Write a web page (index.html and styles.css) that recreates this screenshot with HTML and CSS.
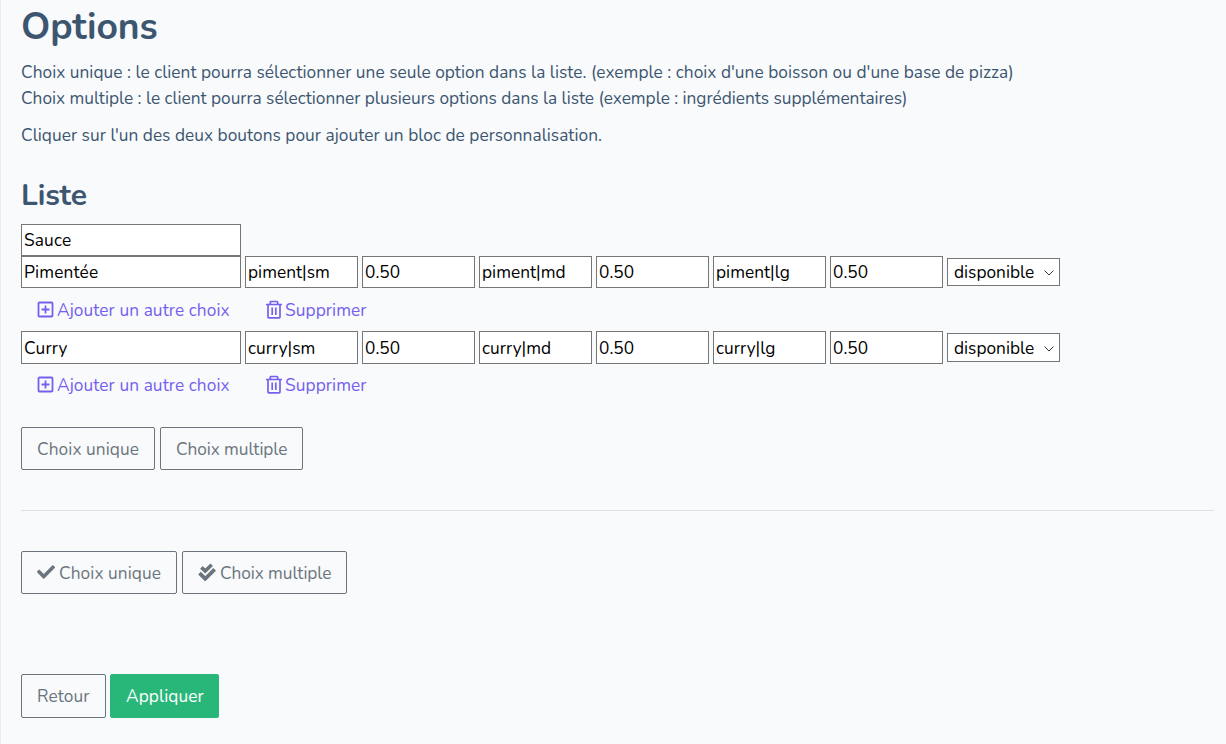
FILE: index.html
```html
<!DOCTYPE html>
<html lang="fr">
<head>
<meta charset="utf-8">
<title>Options</title>
<link rel="stylesheet" href="styles.css">
</head>
<body>
<svg class="sprite" aria-hidden="true">
  <symbol id="plus" viewBox="0 0 18 18"><path d="M2.5 1.5h12a1 1 0 0 1 1 1v12a1 1 0 0 1-1 1h-12a1 1 0 0 1-1-1v-12a1 1 0 0 1 1-1zM8.5 4.500v8M4.500 8.500h8" fill="none" stroke="currentColor" stroke-width="1.800"/></symbol>
  <symbol id="trash" viewBox="0 0 18 20"><path d="M1 4.500h16M5.300 4.200V2.400q0-.9.900-.9h5.600q.9 0 .9.900v1.800M3 4.500v12.500q0 .9.900.9h10.200q.9 0 .9-.9V4.500M7.200 7.500v7.500M10.800 7.500v7.500" fill="none" stroke="currentColor" stroke-width="1.700"/></symbol>
  <symbol id="check" viewBox="0 0 512 512"><path fill="currentColor" d="M173.900 439.400 7.500 273c-10-10-10-26.200 0-36.200l36.200-36.200c10-10 26.200-10 36.200 0L192 312.700 432.100 72.600c10-10 26.200-10 36.200 0l36.200 36.200c10 10 10 26.200 0 36.200L210.100 439.400c-10 10-26.200 10-36.200 0z"/></symbol>
  <symbol id="checks" viewBox="0 0 18 18"><path d="M1.500 10.100 7.200 15.800 16.700 6.400" fill="none" stroke="currentColor" stroke-width="3.800"/><path d="M3.400 4.400 7.200 8.100 13.700 1.700" fill="none" stroke="currentColor" stroke-width="3.600"/></symbol>
</svg>
<main class="page">
  <h1 class="title">Options</h1>
  <p class="intro"><span class="first-line">Choix unique : le client pourra sélectionner une seule option dans la liste. (exemple : choix d'une boisson ou d'une base de pizza)</span><br><span class="second-line">Choix multiple : le client pourra sélectionner plusieurs options dans la liste (exemple : ingrédients supplémentaires)</span></p>
  <p class="intro first-line">Cliquer sur l'un des deux boutons pour ajouter un bloc de personnalisation.</p>
  <h2 class="subtitle">Liste</h2>
  <div class="row"><input class="field wide" value="Sauce"></div>
  <div class="row">
    <input class="field wide" value="Pimentée">
    <input class="field" value="piment|sm"><input class="field" value="0.50">
    <input class="field" value="piment|md"><input class="field" value="0.50">
    <input class="field" value="piment|lg"><input class="field" value="0.50">
    <div class="select">disponible<svg class="chevron" viewBox="0 0 10 6"><path d="M.5.5 5 5 9.500.5" fill="none" stroke="currentColor"/></svg></div>
  </div>
  <div class="actions">
    <a class="link add"><svg class="icon-plus"><use href="#plus"/></svg>Ajouter un autre choix</a>
    <a class="link remove"><svg class="icon-trash"><use href="#trash"/></svg>Supprimer</a>
  </div>
  <div class="row tall">
    <input class="field wide" value="Curry">
    <input class="field" value="curry|sm"><input class="field" value="0.50">
    <input class="field" value="curry|md"><input class="field" value="0.50">
    <input class="field" value="curry|lg"><input class="field" value="0.50">
    <div class="select">disponible<svg class="chevron" viewBox="0 0 10 6"><path d="M.5.5 5 5 9.500.5" fill="none" stroke="currentColor"/></svg></div>
  </div>
  <div class="actions second">
    <a class="link add"><svg class="icon-plus"><use href="#plus"/></svg>Ajouter un autre choix</a>
    <a class="link remove"><svg class="icon-trash"><use href="#trash"/></svg>Supprimer</a>
  </div>
  <div class="buttons list-buttons">
    <button class="btn unique">Choix unique</button>
    <button class="btn multiple">Choix multiple</button>
  </div>
  <hr class="rule">
  <div class="buttons">
    <button class="btn unique-icon"><svg class="icon-check"><use href="#check"/></svg>Choix unique</button>
    <button class="btn multiple-icon"><svg class="icon-check"><use href="#checks"/></svg>Choix multiple</button>
  </div>
  <div class="buttons footer">
    <button class="btn back">Retour</button>
    <button class="btn apply">Appliquer</button>
  </div>
</main>
</body>
</html>
```
FILE: styles.css
```css
* { box-sizing: border-box; }
body { margin: 0; background: #f8fafc; color: #3d5670; font: 17.3px/26px Nunito, Lato, sans-serif; }
.sprite { display: none; }
.page { height: 744px; padding: 4px 12px 0 20px; border-left: 1px solid #e9ecef; overflow: hidden; }
.title { margin: 0 0 10px; font-size: 37.3px; line-height: 46px; font-weight: 700; letter-spacing: -.1px; }
.intro { margin: 0 0 11px; white-space: nowrap; }
.first-line { letter-spacing: .03px; }
.second-line { letter-spacing: -.025px; }
.subtitle { margin: 29px 0 10px; font-size: 30px; line-height: 36px; font-weight: 700; letter-spacing: -.15px; }
.row { display: flex; align-items: center; gap: 4px; height: 32px; }
.row.tall { height: 33px; }
.field { width: 113px; height: 100%; margin: 0; padding: 0 2px; border: 1px solid #767676; border-radius: 0; background: #fff; color: #000; font: inherit; letter-spacing: .03px; }
.field.wide { width: 220px; letter-spacing: .15px; }
.tall .field { padding-top: 1px; }
.select { display: flex; align-items: center; justify-content: space-between; width: 113px; height: 28px; padding: 1px 5px 0 6px; border: 1px solid #767676; background: #fff; color: #000; }
.tall .select { height: 29px; padding-top: 2px; }
.chevron { width: 10px; height: 6px; color: #333; }
.actions { display: flex; height: 43px; padding: 2px 0 0 16px; align-items: center; color: #7460ee; }
.second { padding-top: 0; }
.link { display: flex; align-items: center; letter-spacing: .08px; }
.add { width: 228px; }
.icon-plus { width: 18px; height: 18px; margin: -1px 2px 0 0; }
.icon-trash { width: 18px; height: 20px; margin: -2px 2px 0 0; }
.buttons { display: flex; gap: 5px; }
.list-buttons { margin-top: 20px; }
.btn { display: flex; align-items: center; height: 43px; padding: 2px 15px 0; border: 1px solid #6c757d; border-radius: 2px; background: transparent; color: #6c757d; font: inherit; white-space: nowrap; }
.unique { width: 134px; }
.multiple { width: 143px; }
.unique, .unique-icon { letter-spacing: .08px; }
.multiple, .multiple-icon { letter-spacing: -.08px; }
.unique-icon { width: 156px; }
.multiple-icon { width: 165px; }
.icon-check { width: 18px; height: 18px; margin: -3px 4px 0 0; flex: none; }
.rule { height: 1px; margin: 40px 0; border: 0; background: #dee0e2; }
.footer { gap: 4px; margin-top: 80px; }
.footer .btn { height: 44px; padding-top: 1px; letter-spacing: .08px; }
.back { width: 85px; }
.apply { width: 109px; background: #28b779; border-color: #28b779; color: #fff; }
```
